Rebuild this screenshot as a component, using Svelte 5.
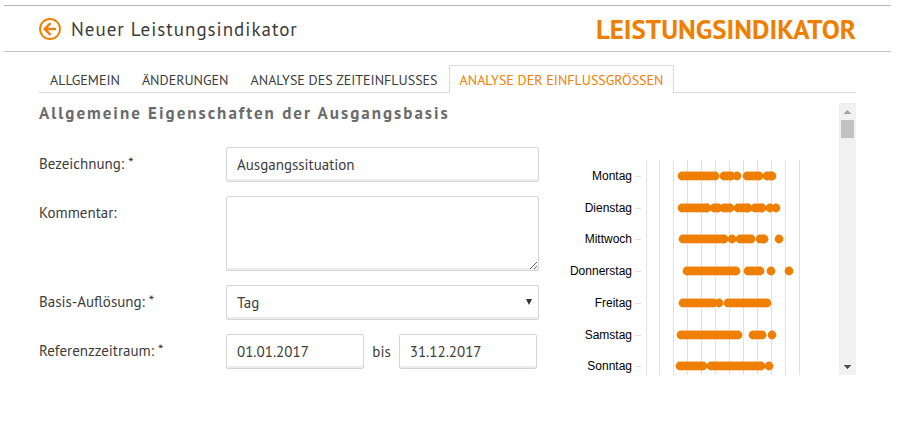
<script lang="ts">
  interface Tab {
    id: string;
    label: string;
  }

  interface Day {
    name: string;
    // spans of measured values, [from, to] on the chart's x axis
    spans: [number, number][];
  }

  const tabs: Tab[] = [
    { id: 'general', label: 'ALLGEMEIN' },
    { id: 'changes', label: 'ÄNDERUNGEN' },
    { id: 'time', label: 'ANALYSE DES ZEITEINFLUSSES' },
    { id: 'factors', label: 'ANALYSE DER EINFLUSSGRÖSSEN' }
  ];

  const days: Day[] = [
    { name: 'Montag', spans: [[122, 155], [164, 171], [177, 177], [187, 199], [207, 212]] },
    { name: 'Dienstag', spans: [[122, 147], [154, 158], [164, 170], [178, 188], [195, 202], [210, 210], [216, 216]] },
    { name: 'Mittwoch', spans: [[123, 164], [172, 172], [180, 191], [200, 204], [219, 219]] },
    { name: 'Donnerstag', spans: [[127, 176], [188, 200], [211, 211], [229, 229]] },
    { name: 'Freitag', spans: [[123, 153], [159, 159], [168, 207]] },
    { name: 'Samstag', spans: [[121, 178], [193, 202], [212, 212]] },
    { name: 'Sonntag', spans: [[120, 143], [151, 201], [209, 209]] }
  ];

  const gridLines = [86, 99, 113, 127, 141, 155, 169, 183, 197, 211, 225, 239];

  let active = $state('factors');
  let name = $state('Ausgangssituation');
  let comment = $state('');
  let resolution = $state('Tag');
  let from = $state('01.01.2017');
  let to = $state('31.12.2017');

  function rowY(index: number) {
    return Math.round(73 + index * 31.7);
  }

  function dots(spans: [number, number][]) {
    const result: number[] = [];
    for (const [start, end] of spans) {
      for (let x = start; x < end; x += 3) result.push(x);
      result.push(end);
    }
    return result;
  }
</script>

<div class="page">
  <header class="header">
    <button class="back" type="button" aria-label="Zurück">
      <svg width="22" height="22" viewBox="0 0 22 22" fill="none" stroke="currentColor">
        <circle cx="11" cy="11" r="10" stroke-width="1.8" />
        <path d="M17 11H6M11.5 5.2L5.7 11l5.8 5.8" stroke-width="2.4" />
      </svg>
    </button>
    <h1 class="title">Neuer Leistungsindikator</h1>
    <span class="module">LEISTUNGSINDIKATOR</span>
  </header>

  <main class="main">
    <div class="tabs" role="tablist">
      {#each tabs as tab (tab.id)}
        <button
          class="tab"
          class:tab--active={active === tab.id}
          type="button"
          role="tab"
          aria-selected={active === tab.id}
          onclick={() => (active = tab.id)}
        >
          {tab.label}
        </button>
      {/each}
    </div>

    <div class="panel">
      <form class="form">
        <h2 class="heading">Allgemeine Eigenschaften der Ausgangsbasis</h2>

        <div class="row">
          <label class="label" for="name">Bezeichnung: *</label>
          <input id="name" class="field" type="text" bind:value={name} />
        </div>

        <div class="row">
          <label class="label" for="comment">Kommentar:</label>
          <textarea id="comment" class="field field--area" bind:value={comment}></textarea>
        </div>

        <div class="row">
          <label class="label" for="resolution">Basis-Auflösung: *</label>
          <div class="select">
            <select id="resolution" class="field" bind:value={resolution}>
              <option>Tag</option>
            </select>
            <svg class="select-arrow" width="6" height="6" viewBox="0 0 6 6">
              <path d="M0 0h6L3 6z" fill="#333" />
            </svg>
          </div>
        </div>

        <div class="row">
          <label class="label" for="from">Referenzzeitraum: *</label>
          <div class="range">
            <input id="from" class="field" type="text" bind:value={from} />
            <label for="to">bis</label>
            <input id="to" class="field" type="text" bind:value={to} />
          </div>
        </div>
      </form>

      <svg class="chart" width="270" height="272" viewBox="0 0 270 272">
        {#each gridLines as x}
          <line class="grid" x1={x} x2={x} y1="57" y2="272" />
        {/each}
        {#each days as day, i (day.name)}
          <text class="day" x="72" y={rowY(i) + 4}>{day.name}</text>
          <line class="grid" x1="75" x2="81" y1={rowY(i)} y2={rowY(i)} />
          {#each dots(day.spans) as x}
            <circle class="dot" cx={x} cy={rowY(i)} r="4.4" />
          {/each}
        {/each}
      </svg>

      <div class="scrollbar">
        <button class="scroll-button" type="button" aria-label="Nach oben">
          <svg width="7" height="4" viewBox="0 0 7 4" shape-rendering="crispEdges">
            <path d="M3 0h1v1h1v1h1v1h1v1H0V3h1V2h1V1h1z" fill="#a3a3a3" />
          </svg>
        </button>
        <div class="thumb"></div>
        <button class="scroll-button scroll-button--down" type="button" aria-label="Nach unten">
          <svg width="7" height="4" viewBox="0 0 7 4" shape-rendering="crispEdges">
            <path d="M0 0h7v1H6v1H5v1H4v1H3V3H2V2H1V1H0z" fill="#505050" />
          </svg>
        </button>
      </div>
    </div>
  </main>
</div>

<style>
  :global(body) {
    margin: 0;
    background: #fff;
  }

  .page {
    padding: 5px 6px 0 4px;
    font-family: 'PT Sans', 'Open Sans', sans-serif;
    font-size: 15px;
    color: #3c3c3b;
  }

  .page * {
    box-sizing: border-box;
  }

  .header {
    display: flex;
    align-items: center;
    height: 47px;
    padding: 0 35px;
    border-top: 1px solid #b5b5b5;
    border-bottom: 1px solid #c3c3c3;
  }

  .back {
    display: flex;
    padding: 0;
    margin-right: 10px;
    color: #ef7f01;
    background: none;
    border: 0;
    cursor: pointer;
  }

  .title {
    flex: 1;
    margin: 0;
    font-size: 19px;
    line-height: 24px;
    font-weight: 400;
    letter-spacing: 1px;
  }

  .module {
    font-size: 27px;
    line-height: 32px;
    font-weight: 700;
    color: #ef7f01;
  }

  .main {
    padding: 13px 35px 0;
  }

  .tabs {
    display: flex;
    border-bottom: 1px solid #dadada;
  }

  .tab {
    height: 28px;
    padding: 0 10px;
    margin-bottom: -1px;
    font-family: inherit;
    font-size: 14px;
    color: inherit;
    white-space: nowrap;
    background: none;
    border: 1px solid transparent;
    border-bottom: 0;
    cursor: pointer;
  }

  .tab--active {
    color: #ef7f01;
    background: #fff;
    border-color: #dadada;
  }

  .panel {
    display: flex;
    margin-top: 10px;
  }

  .form {
    flex: 1;
    display: flex;
    flex-direction: column;
    gap: 14px;
    padding-right: 21px;
  }

  .heading {
    margin: 0 0 10px;
    font-size: 17px;
    line-height: 20px;
    font-weight: 700;
    letter-spacing: 2px;
    white-space: nowrap;
    color: #6b6b6b;
  }

  .row {
    display: grid;
    grid-template-columns: 187px 1fr;
  }

  .label {
    padding-top: 8px;
    line-height: 18px;
  }

  .field {
    display: block;
    width: 100%;
    min-width: 0;
    height: 35px;
    padding: 0 10px;
    font: inherit;
    color: inherit;
    background: #fff;
    border: 1px solid #d5d5d5;
    border-radius: 2px;
    box-shadow: inset 0 -2px 0 #ececec;
    appearance: none;
  }

  .field--area {
    height: 75px;
    resize: vertical;
  }

  .select {
    position: relative;
  }

  .select-arrow {
    position: absolute;
    right: 7px;
    top: 14px;
    pointer-events: none;
  }

  .range {
    display: grid;
    grid-template-columns: 1fr auto 1fr;
    align-items: center;
    gap: 8px;
    padding-right: 2px;
  }

  .chart {
    flex: none;
    margin-right: 9px;
  }

  .grid {
    stroke: #e0e0e0;
    shape-rendering: crispEdges;
  }

  .day {
    font-family: 'Liberation Sans', Arial, sans-serif;
    font-size: 12px;
    text-anchor: end;
    fill: #000;
  }

  .dot {
    fill: #ef7f01;
  }

  .scrollbar {
    flex: none;
    display: flex;
    flex-direction: column;
    width: 17px;
    background: #f1f1f1;
  }

  .scroll-button {
    display: flex;
    align-items: center;
    justify-content: center;
    height: 17px;
    padding: 0;
    background: none;
    border: 0;
  }

  .scroll-button--down {
    margin-top: auto;
  }

  .thumb {
    height: 18px;
    margin: 0 2px;
    background: #c1c1c1;
  }
</style>
